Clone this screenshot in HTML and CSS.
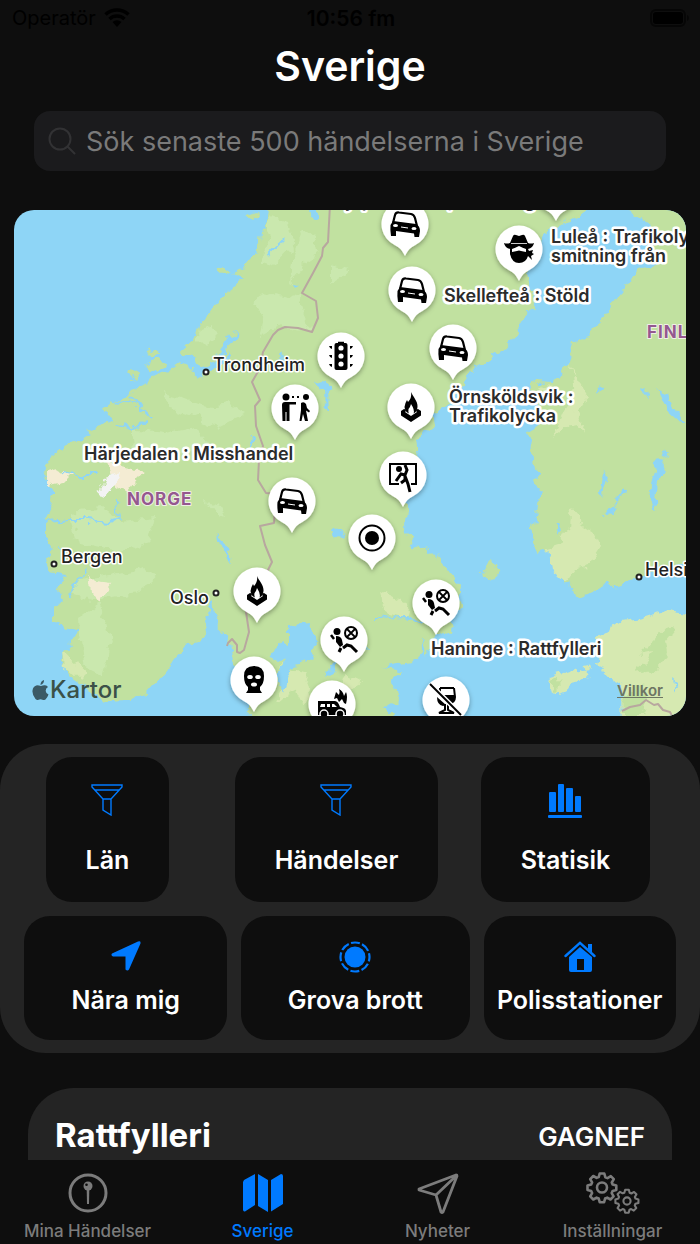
FILE: index.html
```html
<!DOCTYPE html>
<html lang="sv">
<head>
<meta charset="UTF-8">
<meta name="viewport" content="width=device-width, initial-scale=1.0">
<title>Sverige</title>
<link rel="stylesheet" href="styles.css">
</head>
<body>

<div class="status-bar">
<span class="carrier">Operatör
<svg width="26" height="20" viewBox="0 0 26 20" aria-hidden="true"><path d="M1.500 6.500a17 17 0 0 1 23 0M5.500 11a11 11 0 0 1 15 0" fill="none" stroke="#000" stroke-width="3.500"/><path d="M13 19l-4.500-5a7 7 0 0 1 9 0z"/></svg>
</span>
<span class="clock">10:56 fm</span>
<svg class="battery" width="40" height="18" viewBox="0 0 40 18" aria-hidden="true"><rect x="1" y="1" width="34" height="16" rx="5" fill="none" stroke="#060606" stroke-width="2"/><rect x="3" y="3" width="30" height="12" rx="3"/><path d="M37 6v6q2-1 2-3t-2-3z" fill="#060606"/></svg>
</div>

<main>
<h1>Sverige</h1>

<label class="search">
<svg width="28" height="28" viewBox="0 0 28 28" aria-hidden="true"><circle cx="12" cy="12" r="10.500"/><path d="M19.500 19.500l7 7"/></svg>
<input type="search" aria-label="Sök händelser" placeholder="Sök senaste 500 händelserna i Sverige">
</label>

<div class="map">
<svg class="map-canvas" viewBox="14 210 672 506" preserveAspectRatio="xMidYMid slice" role="img" aria-label="Karta över Sverige">
<defs>
<filter id="coast" filterUnits="userSpaceOnUse" x="0" y="190" width="710" height="550">
<feTurbulence type="fractalNoise" baseFrequency="0.09" numOctaves="3" seed="4"/>
<feDisplacementMap in="SourceGraphic" scale="13" xChannelSelector="R" yChannelSelector="G"/>
</filter>
<filter id="shadow" x="-30%" y="-30%" width="160%" height="170%">
<feDropShadow dx="0" dy="2" stdDeviation="2.500" flood-opacity=".35"/>
</filter>

<path id="pin" fill="#fff" filter="url(#shadow)" d="M0 32C-3 26-5 24-10 21.300A23.500 23.500 0 1 1 10 21.300C5 24 3 26 0 32z"/>

<g id="car">
<path d="M-12-1L-10-9Q-9-12-6-11.500L6-10Q9-9.500 10-6L12 2" fill="none" stroke="#000" stroke-width="2.200"/>
<path d="M-12-3L11 0Q15 2 15 7L14 13h-4.500l-.5-3.500L-9 7v5h-5q-1-6-.5-11z"/>
<ellipse cx="-9.500" cy="1.500" rx="2.500" ry="1.600" fill="#fff"/><ellipse cx="9" cy="4.500" rx="2.500" ry="1.600" fill="#fff"/>
<path d="M-4 3l7 1" stroke="#fff" stroke-width="1"/>
</g>

<g id="fire">
<path d="M0-15C2-10 7-6 6.500 0Q6 5 2.500 6.500Q4 3 0-3Q-1 1-2.500 2Q-3 5-2 6.500Q-6 5-6.500 0Q-6-4-4-7L-3-5Q1-9 0-15z"/>
<path d="M-10 4l3-2q2 0 2 2l-1 1 6 4 6-4-1-1q0-2 2-2l3 2v4.500L0 15-10 8.500z"/>
</g>

<g id="airbag">
<circle cx="-7" cy="-8.500" r="3.500"/>
<path d="M-13-5l3 4" stroke="#000" stroke-width="2.500"/>
<path d="M-8-4q5 0 6 4l1 5-3 2-4-5z"/>
<path d="M-3 8l-2 4M-1 8l4-3 4 1 6 6" fill="none" stroke="#000" stroke-width="3"/>
<circle cx="7" cy="-7" r="6" fill="none" stroke="#000" stroke-width="2"/>
<path d="M3-11l8 8M11-11l-8 8" stroke="#000" stroke-width="1.800"/>
</g>

<g id="light">
<rect x="-6.500" y="-13" width="13" height="27" rx="2"/><path d="M-3-13.500h6" stroke="#000" stroke-width="1.500"/>
<circle cy="-8" r="2.600" fill="#fff"/><circle cy="0" r="2.600" fill="#fff"/><circle cy="8" r="2.600" fill="#fff"/>
<path d="M-12-10h3v3q-2 0-3-3zM-12-1h3v3q-2 0-3-3zM-12 8h3v3q-2 0-3-3zM12-10H9v3q2 0 3-3zM12-1H9v3q2 0 3-3zM12 8H9v3q2 0 3-3z"/>
</g>

<g id="people">
<circle cx="-9" cy="-11" r="3.500"/><circle cx="11" cy="-11" r="3"/>
<path d="M-3-11h2M2-11h2" stroke="#000" stroke-width="2"/>
<path d="M-13-3Q-13-6-10-6H1v2.500H-5.500V13h-3V4h-1v9h-3z"/>
<path d="M6-5q3-2 5 1l1 4 3 3-1 1.500-3-2 2 10.500h-3L8 6 6.500 13H4.500L6 2z"/>
</g>

<g id="bandit">
<path d="M-9-6L-6-13Q-5-15-3-14L0-13 3-14Q5-15 6-13L9-6Q12-5 15-6 14-1 9 0L10 2l4-1-1 3 2 1-3 2 1 4-4-4Q7 14 0 14-7 14-9 5L-9 0Q-14-1-15-6-12-5-9-6z"/>
<path d="M-7 0Q-4-1 0-3 4-1 7 0L7 3 2 2Q0 1-2 2L-7 3z" fill="#fff"/><path d="M-8-5.500H8" stroke="#fff" stroke-width=".8"/>
</g>

<g id="burglar">
<path d="M-4 9h-9V-11H13V9H8" fill="none" stroke="#000" stroke-width="2"/>
<circle cx="-4" cy="-6" r="3"/>
<path d="M-7 6l5-7 4 1 0 5-4 3M2 0l2-5-2-5M2 1l3 8 2 8" fill="none" stroke="#000" stroke-width="3"/>
</g>

<g id="target"><circle r="12.500" fill="none" stroke="#000" stroke-width="2"/><circle r="7"/></g>

<g id="mask">
<path d="M0-14Q10-14 10-4 10 4 6 7L6 10 8 13H-8L-6 10-6 7Q-10 4-10-4-10-14 0-14z"/>
<g fill="#fff"><ellipse cx="-4" cy="-3" rx="2.800" ry="2"/><ellipse cx="4" cy="-3" rx="2.800" ry="2"/><ellipse cy="4.500" rx="3" ry="2"/></g>
</g>

<g id="carfire">
<path d="M-14-3H3q3 0 5 6 6 1 6 4v4h-28z"/>
<path d="M-11 0h4v3h-5zM-5 0h3v3h-3zM0 0h2l3 3H0z" fill="#fff"/>
<g stroke="#fff" stroke-width="1.500"><circle cx="-8" cy="10" r="4"/><circle cx="8" cy="10" r="4"/></g>
<path d="M2-5l2-7 3 3q1-4 0-6 4 2 5 7l2-4q2 4 0 12l-2-1-2-4-3 3-2-4z"/>
</g>

<g id="nodrink">
<path d="M-6-12H8M-6-12v8M8-12l1 9Q9 3 2 4V10L8 13H-7l6-3V4" fill="none" stroke="#000" stroke-width="2"/>
<path d="M-3-5H9Q10 3 2 4zM-9-3L0 5l-3 1q-6-1-6-9z"/>
<path d="M-14-14L16 16" stroke="#fff" stroke-width="5"/><path d="M-16-16L15 15" stroke="#000" stroke-width="2"/>
</g>
</defs>

<rect class="sea" x="0" y="190" width="710" height="550"/>
<g filter="url(#coast)">
<!-- Norge och Sverige -->
<path class="land" d="M270 190L267 215 268 230 260 232 259 243 254 255 247 262 243 268 233 273 243 279 233 288 226 292 221 299 212 307 209 315 198 327 195 338 184 347 183 354 192 356 195 365 205 366 222 359 230 350 232 355 212 372 198 378 192 376 188 366 180 362 171 368 166 374 156 373 150 382 134 388 122 400 110 402 103 408 107 414 116 420 101 425 84 430 93 434 84 438 72 441 60 450 50 457 43 473 46 483 53 493 47 502 51 514 46 523 46 538 54 550 47 560 51 572 67 575 56 587 63 600 54 610 54 622 67 629 79 628 73 643 63 648 62 663 73 677 90 690 107 702 127 701 147 692 163 674 177 657 187 643 200 641 207 630 204 616 211 611 211 598 214 612 217 629 230 640 232 660 239 685 248 707 247 740 392 740 392 716 385 708 398 700 394 682 401 671 381 667 412 662 423 650 422 631 428 657 433 640 453 630 448 621 463 605 457 583 447 569 432 553 412 545 407 527 408 507 404 475 418 457 415 438 433 427 440 407 460 387 473 368 500 352 513 340 522 320 538 303 525 275 540 240 549 228 565 223 584 212 586 190z"/>
<!-- Finland -->
<path class="land" d="M627 190L628 210 647 222 652 240 655 265 637 271 628 283 613 303 597 327 584 340 572 344 567 363 560 375 552 384 528 382 532 397 545 420 527 433 532 448 533 462 538 480 539 498 535 520 531 535 539 555 547 550 557 563 563 583 580 596 603 587 623 584 640 577 657 568 700 562 710 190z"/>
<!-- Estland -->
<path class="land-light" d="M710 615L686 614 663 610 640 617 623 620 613 628 597 637 600 650 597 663 607 677 621 684 622 740H710z"/>
<path class="land-light" d="M550 677L577 668 591 675 570 688 558 694 548 687zM583 667l8-2 2 6-7 1z"/>
<path class="land" d="M483 568l6-5 10 6-5 8-10 4zM217 270l7-3 8 4-8 5zM144 354l10-5 6 5-7 3zM146 366l9-7 11 2 3 5-20 5zM129 372l8-2 2 6-8 2zM246 217l8-4 4 2-7 6zM550 680l8-3 3 8-6 6z"/>
<path class="land" d="M655 640l12-14 7 4-8 10 2 15-12 14-22 3 15-11 4-10-14 3zM622 694l18-8 9 12-6 18h-20z"/>
<!-- ljusare terräng -->
<g class="hill">
<path d="M268 214l20 8 5 25-17 18-16-5 10-20zM303 228l10 8 9 15-18 12-14 20 2-24zM330 265l18 4-8 10-10 6zM275 293l25 5 3 15 8 18-30-6-22 12 4-20-10-15zM200 330l15-6 3 10-12 12-8-8zM160 392l24 6 28 10-20 8-20-6zM200 408l30-4 14 8-30 16-12-5zM130 428l35 4 30-6 12 18-18 10-55-4zM70 512l30-4 20 14 35-4-6 24-30 10-40-8zM80 580l25-4 40-8 12 8-20 16-45 8-20-6zM78 620l22-16 12 36-10 35-20-10zM206 500l15 3 6 14-12-5z"/>
</g>
<g class="field">
<path d="M62 650l14 12 8 10-4 4-16-8zM280 665l28 8-3 12-16 8-12 10 8-24zM295 688l12-6 4 15-10 4zM382 590l12 6 16 8-4 14-20-6zM345 673l14 6-8 10-10-4zM547 548l12-4 10-20 2-14 12 14 12 8 6 14-12 18-14 4-10 14-14-12zM566 362l6 14 2 20-10 14-12 28 18-16 12 10 2-6-8-12 12-16zM538 386l20 4-12 10z"/>
</g>
<path class="rock" d="M46 475l16-4 10 3-8 8-18 4zM106 462l24 6 12 6-14 18-12-8zM89 574l8 8 14 2-8 10-4 10-8-12z"/>
<path class="ice" d="M106 476l14-5-6 14-8 10-9-2z"/>
<!-- sjöar och fjordar -->
<g class="sea">
<path d="M288 625l24-2 4 20-4 18-20 6-8 22-8-6 6-20-12-6 10-14 8 4zM330 663l10-1-6 10-8 6zM315 382l8-2 10 8-6 4 1 18-3-2-1-16zM215 535l10 5 6 22-2-1-6-13zM329 527l15 4-2 8-8-2zM291 282l8 1-6 4zM228 335l10-4-16 26-5 2zM308 210l8 0 0 6-6-2zM280 355l4 2-3 4zM598 385l6 4-4 6zM643 386l4 6-2 6zM657 388l12 8 12 22 5 8-18-16zM603 473l4 4-3 20-3-4zM625 488l3 2-14 14-4 12-3-4zM655 462l10-1-8 30-2 20-7-20zM556 522l6 6-2 6zM673 680l5 4-3 8zM664 450l4 2-3 8z"/>
</g>
<path class="fjord" d="M46 522l24-2 20 0 20 2 12-3M62 472l16 3 18 0M85 568l-16 30M268 256l14-14M132 395l8 12 10 10M118 424l12 6 16-8M112 402l24 2M57 548l10 8M118 518l-2-16M376 618l30-1 16 6M252 438l-2 14M345 640l24 8"/>
</g>
<path class="border" d="M330 205L328 242 323 248 322 256 313 273 302 293 316 301 318 318 312 332 298 328 285 327 278 330 273 335 263 352 260 368 252 382 260 400 255 406 256 426 263 446 259 460 258 480 266 493 276 494 274 523 260 526 265 545 272 562 258 590 246 612 249 632 244 650 240 653 237 652 237 645 232 639 228 643 227 646M622 711l8-4 10-2 6-5 8 5 4-1 5 6 7 2 2 4"/>

<g class="town">
<circle cx="206" cy="372" r="2.500"/><circle cx="54" cy="564" r="2.500"/><circle cx="216" cy="593" r="2.500"/><circle cx="639" cy="577" r="2.500"/>
<text x="213" y="371">Trondheim</text>
<text x="61" y="563">Bergen</text>
<text x="170" y="604">Oslo</text>
<text x="645" y="576">Helsingfors</text>
</g>
<g class="country">
<text x="127" y="505">NORGE</text>
<text x="647" y="338">FINLAND</text>
</g>
<g class="event">
<text x="326" y="207">Arjeplog : Rån, räddning</text>
</g>

<g>
<use href="#pin" x="556" y="189"/>
<g transform="translate(405 224)"><use href="#pin"/><use href="#car"/></g>
<g transform="translate(519 249)"><use href="#pin"/><use href="#bandit"/></g>
<g transform="translate(412 290)"><use href="#pin"/><use href="#car"/></g>
<g transform="translate(453 348)"><use href="#pin"/><use href="#car"/></g>
<g transform="translate(341 356)"><use href="#pin"/><use href="#light"/></g>
<g transform="translate(295 408)"><use href="#pin"/><use href="#people"/></g>
<g transform="translate(411 407)"><use href="#pin"/><use href="#fire"/></g>
<g transform="translate(403 475)"><use href="#pin"/><use href="#burglar"/></g>
<g transform="translate(292 501)"><use href="#pin"/><use href="#car"/></g>
<g transform="translate(372 538)"><use href="#pin"/><use href="#target"/></g>
<g transform="translate(257 591)"><use href="#pin"/><use href="#fire"/></g>
<g transform="translate(436 603)"><use href="#pin"/><use href="#airbag"/></g>
<g transform="translate(344 640)"><use href="#pin"/><use href="#airbag"/></g>
<g transform="translate(254 680)"><use href="#pin"/><use href="#mask"/></g>
<g transform="translate(332 704)"><use href="#pin"/><use href="#carfire"/></g>
<g transform="translate(446 700)"><use href="#pin"/><use href="#nodrink"/></g>
</g>

<g class="event">
<text x="551" y="243">Luleå : Trafikolycka,</text>
<text x="551" y="262">smitning från</text>
<text x="444" y="302">Skellefteå : Stöld</text>
<text x="449" y="403">Örnsköldsvik :</text>
<text x="449" y="422">Trafikolycka</text>
<text x="84" y="460">Härjedalen : Misshandel</text>
<text x="431" y="655">Haninge : Rattfylleri</text>
</g>
</svg>
<span class="map-brand">
<svg width="17" height="20" viewBox="0 0 17 20" aria-hidden="true"><path d="M12 0q.3 4-3.500 5Q8.300 1.500 12 0zM9 6q2-1 4-.8 2 .3 3 1.800-2.500 1.500-2.300 4 .2 2.500 2.800 3.500-1 3-3 5-1.500 1-3 .2-2-.8-4 0-1.500.6-3-.7Q0 15 .5 10.500 1 6 5 5.200 7 5.200 9 6z"/></svg>Kartor
</span>
<a class="map-terms" href="#">Villkor</a>
</div>

<section class="panel">
<div class="row row-top">
<button type="button">
<svg width="32" height="32" viewBox="0 0 32 32" class="line" aria-hidden="true"><path d="M1 1h30v2L20 15v16l-8-5V15L1 3zM4 6h24M12 15h8"/></svg>
Län
</button>
<button type="button">
<svg width="32" height="32" viewBox="0 0 32 32" class="line" aria-hidden="true"><path d="M1 1h30v2L20 15v16l-8-5V15L1 3zM4 6h24M12 15h8"/></svg>
Händelser
</button>
<button type="button">
<svg width="34" height="34" viewBox="0 0 34 34" aria-hidden="true"><rect x="1" y="8" width="7" height="20" rx="1"/><rect x="10" y="0" width="6" height="28" rx="1"/><rect x="18" y="4" width="7" height="24" rx="1"/><rect x="27" y="12" width="6" height="16" rx="1"/><rect y="31" width="34" height="3" rx="1"/></svg>
Statisik
</button>
</div>
<div class="row row-bottom">
<button type="button">
<svg width="30" height="30" viewBox="0 0 30 30" aria-hidden="true"><path d="M1 12.500L27 .5q3-1 2.500 2L18 28.500q-1.500 2-3.500 0V15.500H2Q-.5 14.500 1 12.500z"/></svg>
Nära mig
</button>
<button type="button">
<svg width="32" height="32" viewBox="0 0 32 32" aria-hidden="true"><circle cx="16" cy="16" r="10.500"/><circle cx="16" cy="16" r="14.500" fill="none" stroke="#007aff" stroke-width="2.200" stroke-dasharray="9 2.388" stroke-dashoffset="4.500"/></svg>
Grova brott
</button>
<button type="button" class="tight">
<svg width="32" height="32" viewBox="0 0 32 32" aria-hidden="true"><path d="M1.500 15L16 1.800 30.500 15" fill="none" stroke="#007aff" stroke-width="2.400" stroke-linecap="round"/><path d="M24 3h4v9l-4-4z"/><path fill-rule="evenodd" d="M5 16L16 6l12 10v13q0 2-2 2H7q-2 0-2-2zM13 18v11h7V18z"/></svg>
Polisstationer
</button>
</div>
</section>

<article class="report">
<h2>Rattfylleri</h2>
<span>GAGNEF</span>
</article>
</main>

<nav class="tabs">
<a href="#">
<svg width="40" height="42" viewBox="0 0 40 42" aria-hidden="true"><circle cx="20" cy="21" r="18" fill="none" stroke="#7c7c7c" stroke-width="3"/><circle cx="20" cy="14" r="4.500"/><path d="M18.700 18h2.600l-.3 14h-2z"/><circle cx="18.500" cy="12.700" r="1.300" fill="#0e0e0e"/></svg>
Mina Händelser
</a>
<a href="#" class="active" aria-current="page">
<svg width="40" height="42" viewBox="0 0 40 42" aria-hidden="true"><path d="M1 8L12 2v31L2 39.500q-2 .5-2-2V10zM15 2l10 6v32l-10-6zM28 8L38 2q2 0 2 2v28l-12 7.500z"/></svg>
Sverige
</a>
<a href="#">
<svg width="42" height="42" viewBox="0 0 42 42" aria-hidden="true"><path d="M2 17L39 3Q40 3 40 4L26 40Q25 41 24 40L19 23 2 18zM19 23L39 4" fill="none" stroke="#7c7c7c" stroke-width="2.800" stroke-linejoin="round"/></svg>
Nyheter
</a>
<a href="#">
<svg width="54" height="42" viewBox="0 0 54 42" aria-hidden="true" fill="none" stroke="#7c7c7c" stroke-width="2.600" stroke-linejoin="round">
<defs><path id="gear" d="M-2.300-14h4.600l1 3.700 2.200.9L8.800-11.300l3 3L9.800-5l.8 2 3.700 1v4.400l-3.700 1-.9 2.200 1.900 3.300-3.100 3.100-3.300-1.900-2.100.9-1 3.700h-4.400l-1-3.700-2.100-.9-3.300 1.900-3.100-3.100 1.900-3.300-.9-2.200-3.700-1V-2l3.700-1 .9-2.100-1.900-3.300 3.100-3.100 3.300 1.900 2.100-.8z"/></defs>
<use href="#gear" x="16" y="15.500"/><circle cx="16" cy="15.500" r="5"/>
<g transform="translate(41 29) scale(.8)"><use href="#gear"/><circle r="4.500"/></g>
</svg>
Inställningar
</a>
</nav>

</body>
</html>
```

FILE: styles.css
```css
* {
box-sizing: border-box;
}
body {
margin: 0;
height: 100vh;
display: flex;
flex-direction: column;
overflow: hidden;
background-color: #0e0e0e;
color: #fff;
font-family: Inter, "Liberation Sans", sans-serif;
}
.status-bar {
display: grid;
grid-template-columns: 1fr auto 1fr;
align-items: center;
height: 36px;
padding: 0 10px 0 12px;
color: #000;
font-size: 20px;
}
.carrier {
display: flex;
align-items: center;
gap: 8px;
}
.clock {
font-size: 21px;
font-weight: 600;
}
.battery {
justify-self: end;
}
main {
flex: 1;
min-height: 0;
overflow: hidden;
}
h1 {
margin: 0;
font-size: 41px;
line-height: 60px;
font-weight: 600;
text-align: center;
}
.search {
display: flex;
align-items: center;
gap: 10px;
height: 60px;
margin: 15px 34px 39px;
padding: 0 14px;
border-radius: 16px;
background-color: #1b1b1d;
}
.search svg {
flex: none;
fill: none;
stroke: #323234;
stroke-width: 2;
stroke-linecap: round;
}
.search input {
flex: 1;
min-width: 0;
padding: 0;
border: 0;
outline: 0;
background: none;
color: #fff;
font: inherit;
font-size: 27px;
}
.search input::placeholder {
color: #7a7a7a;
opacity: 1;
}

/* karta */
.map {
position: relative;
margin: 0 14px;
aspect-ratio: 672 / 506;
border-radius: 20px;
overflow: hidden;
}
.map-canvas {
display: block;
width: 100%;
height: 100%;
}
.sea {
fill: #8ed5f6;
}
.land {
fill: #c1e1a0;
}
.land-light,
.field {
fill: #d6e9b1;
}
.hill {
fill: #cae8ae;
}
.rock {
fill: #f4ecd3;
}
.ice {
fill: #f3f3f3;
}
.fjord {
fill: none;
stroke: #8ed5f6;
stroke-width: 2;
}
.border {
fill: none;
stroke: #b8a79f;
stroke-width: 2;
stroke-linejoin: round;
}
.map text {
paint-order: stroke;
stroke: #fff;
stroke-linejoin: round;
}
.town {
font-size: 18px;
font-weight: 500;
fill: #222;
}
.town text {
stroke-width: 3px;
}
.town circle {
fill: #fff;
stroke: #222;
stroke-width: 2;
}
.event {
font-size: 18px;
font-weight: 600;
fill: #2b2b2b;
}
.event text {
stroke-width: 5px;
}
.country {
font-size: 17px;
font-weight: 700;
letter-spacing: 1px;
fill: #94588f;
}
.country text {
stroke: #f0eee6;
stroke-width: 2px;
}
.map-brand {
position: absolute;
left: 18px;
bottom: 10px;
display: flex;
align-items: center;
gap: 1px;
font-size: 24px;
line-height: 32px;
font-weight: 500;
color: #3b5148;
}
.map-brand svg {
fill: #3b5a66;
}
.map-terms {
position: absolute;
right: 23px;
bottom: 16px;
font-size: 15px;
line-height: 18px;
font-weight: 600;
color: #6d7563;
}

/* knappar */
.panel {
display: grid;
gap: 14px;
margin-top: 28px;
padding: 13px 0;
border-radius: 46px;
background-color: #242424;
}
.row-top {
display: grid;
grid-template-columns: repeat(3, 1fr);
justify-items: center;
gap: 14px;
padding-right: 27px;
}
.row-bottom {
display: flex;
justify-content: center;
gap: 14px;
}
.row button {
display: flex;
flex-direction: column;
align-items: center;
border: 0;
border-radius: 26px;
background-color: #0e0e0e;
color: #fff;
font: inherit;
font-size: 25px;
line-height: 30px;
font-weight: 600;
white-space: nowrap;
cursor: pointer;
}
.row-top button {
height: 145px;
padding: 27px 40px;
justify-content: space-between;
}
.row-bottom button {
height: 124px;
padding: 25px 47px;
justify-content: space-between;
}
.row-bottom .tight {
padding: 25px 13px;
}
.row svg {
fill: #007aff;
}
.row .line {
fill: none;
stroke: #007aff;
stroke-width: 1.4;
}

.report {
display: flex;
justify-content: space-between;
align-items: flex-start;
height: 260px;
margin: 35px 28px 0;
padding: 26px 27px;
border-radius: 46px;
background-color: #242424;
font-size: 26px;
line-height: 46px;
font-weight: 600;
}
.report h2 {
margin: 0;
font-size: 33px;
line-height: 42px;
font-weight: 700;
}

.tabs {
display: grid;
grid-template-columns: repeat(4, 1fr);
height: 84px;
padding-top: 12px;
background-color: #0e0e0e;
}
.tabs a {
display: flex;
flex-direction: column;
align-items: center;
gap: 6px;
color: #7c7c7c;
fill: #7c7c7c;
font-size: 17px;
line-height: 22px;
font-weight: 500;
text-decoration: none;
}
.tabs .active {
color: #007aff;
fill: #007aff;
}
```
